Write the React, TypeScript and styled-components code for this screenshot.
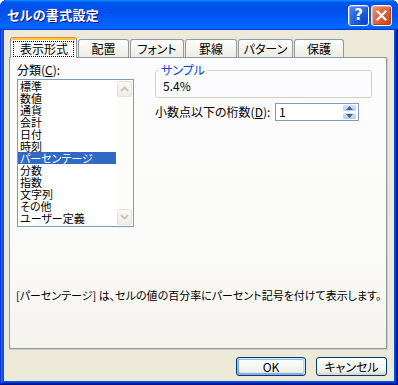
import React from "react";
import styled, { createGlobalStyle, css } from "styled-components";

const GlobalStyle = createGlobalStyle`
  html, body { margin: 0; padding: 0; background: #ffffff; }
  body {
    font-family: "Noto Sans CJK JP", "Noto Sans", sans-serif;
    font-size: 12px;
    font-feature-settings: "palt";
    color: #000;
  }
  * { box-sizing: border-box; }
`;

const Window = styled.div`
  width: 398px;
  height: 385px;
  display: flex;
  flex-direction: column;
  background: #0054e3;
  border-radius: 7px 7px 0 0;
  overflow: hidden;
  box-shadow: inset -1px -1px #00138c, inset 1px 1px #0831d9,
    inset -2px -2px #001ea0, inset 2px 2px #166aee, inset -3px -3px #003bda,
    inset 3px 3px #0855dd;
`;

const TitleBar = styled.div`
  height: 30px;
  flex: none;
  display: flex;
  align-items: center;
  padding: 0 6px 0 7px;
  border-radius: 7px 7px 0 0;
  background: linear-gradient(
    180deg,
    #0997ff,
    #0053ee 8%,
    #0050ee 40%,
    #0066ff 88%,
    #0066ff 93%,
    #005bff 95%,
    #003dd7 96%,
    #003dd7
  );
`;

const TitleText = styled.div`
  flex: 1;
  color: #fff;
  font-weight: bold;
  font-size: 13px;
  line-height: 16px;
  letter-spacing: 0.3px;
  text-shadow: 1px 1px #0f1089;
`;

const CaptionButton = styled.div<{ $kind: "help" | "close" }>`
  width: 21px;
  height: 21px;
  border: 1px solid #fff;
  border-radius: 3px;
  display: flex;
  align-items: center;
  justify-content: center;
  color: #fff;
  font-family: "DejaVu Sans", sans-serif;
  font-weight: bold;
  font-size: 15px;
  line-height: 1;
  ${(p) =>
    p.$kind === "help"
      ? css`
          margin-right: 2px;
          background: radial-gradient(
            circle at 90% 90%,
            #0043cf 0%,
            #2663de 55%,
            #5a8ef5 100%
          );
          box-shadow: inset -1px -1px #1a4cc4, inset 1px 1px #7aa4ff;
        `
      : css`
          background: radial-gradient(
            circle at 90% 90%,
            #cc4614 0%,
            #dc6541 55%,
            #f09c80 100%
          );
          box-shadow: inset -1px -1px #c03a10, inset 1px 1px #f5a889;
        `}
`;

const Client = styled.div`
  flex: 1;
  margin: 0 4px 4px;
  background: #ece9d8;
  display: flex;
  flex-direction: column;
  padding: 7px 7px 5px 5px;
`;

const TabRow = styled.div`
  height: 20px;
  flex: none;
  display: flex;
  align-items: flex-end;
  gap: 1px;
  padding-left: 1px;
  position: relative;
  z-index: 1;
`;

const Tab = styled.div<{ $w: number; $active?: boolean }>`
  width: ${(p) => p.$w}px;
  height: 18px;
  border: 1px solid #919b9c;
  border-bottom: none;
  border-radius: 3px 3px 0 0;
  display: flex;
  align-items: center;
  justify-content: center;
  line-height: 12px;
  background: linear-gradient(180deg, #ffffff, #f3f2ec 60%, #ecebe4);
  ${(p) =>
    p.$active &&
    css`
      height: 21px;
      margin-bottom: -1px;
      background: #fcfcfe;
      border-top: 1px solid #e68b2c;
      box-shadow: inset 0 2px #ffc73c;
      padding-top: 1px;
    `}
`;

const FocusLabel = styled.span`
  border: 1px dotted #000;
  padding: 1px 5px 1px 6px;
  line-height: 12px;
`;

const Panel = styled.div`
  height: 292px;
  flex: none;
  border: 1px solid #919b9c;
  background: linear-gradient(180deg, #fcfcfe 0%, #fbfbf9 60%, #f4f3ee 100%);
  box-shadow: 1px 1px 0 #d0cdbe;
  display: flex;
  flex-direction: column;
  padding: 5px 0 0 7px;
`;

const TopRow = styled.div`
  display: flex;
  gap: 21px;
`;

const LeftCol = styled.div`
  width: 117px;
  display: flex;
  flex-direction: column;
`;

const FieldLabel = styled.div`
  height: 16px;
  line-height: 14px;
`;

const Underline = styled.span`
  text-decoration: underline;
  text-underline-offset: 1px;
`;

const ListBox = styled.div`
  height: 148px;
  border: 1px solid #7f9db9;
  background: #fff;
  display: flex;
`;

const ListItems = styled.div`
  flex: 1;
  display: flex;
  flex-direction: column;
`;

const ListRow = styled.div<{ $selected?: boolean }>`
  height: 12px;
  line-height: 12px;
  font-size: 11px;
  padding-left: 2px;
  white-space: nowrap;
  ${(p) =>
    p.$selected &&
    css`
      background: #316ac5;
      color: #fff;
    `}
`;

const ScrollBar = styled.div`
  width: 17px;
  display: flex;
  flex-direction: column;
  justify-content: space-between;
  padding: 1px;
  background: #fcfcfa;
`;

const ScrollButton = styled.div`
  height: 16px;
  border: 1px solid #e6e4da;
  border-radius: 2px;
  background: linear-gradient(180deg, #f9f8f4, #efeee6);
  display: flex;
  align-items: center;
  justify-content: center;
`;

const RightCol = styled.div`
  width: 217px;
  display: flex;
  flex-direction: column;
  margin-top: 1px;
`;

const GroupBox = styled.fieldset`
  margin: 0;
  min-width: 0;
  border: 1px solid #d0d0bf;
  border-radius: 3px;
  padding: 4px 0 5px 7px;
`;

const GroupLegend = styled.legend`
  color: #0046d5;
  padding: 0 2px;
  margin-left: -4px;
  line-height: 12px;
  font-size: 12px;
`;

const SampleValue = styled.div`
  line-height: 12px;
`;

const SpinRow = styled.div`
  display: flex;
  align-items: center;
  margin-top: 5px;
  height: 18px;
`;

const SpinLabel = styled.div`
  width: 120px;
  line-height: 12px;
  white-space: nowrap;
`;

const SpinBox = styled.div`
  width: 84px;
  height: 18px;
  border: 1px solid #7f9db9;
  background: #fff;
  display: flex;
  align-items: center;
  padding: 0 1px 0 3px;
`;

const SpinValue = styled.div`
  flex: 1;
  line-height: 12px;
`;

const SpinButtons = styled.div`
  width: 15px;
  height: 16px;
  display: flex;
  flex-direction: column;
`;

const SpinButton = styled.div`
  flex: 1;
  border: 1px solid #fff;
  border-radius: 2px;
  background: linear-gradient(180deg, #d8e3fb, #b6cbf5);
  display: flex;
  align-items: center;
  justify-content: center;
`;

const Description = styled.div`
  margin-top: 62px;
  margin-left: -1px;
  line-height: 12px;
  font-size: 11px;
  white-space: nowrap;
`;

const Footer = styled.div`
  display: flex;
  justify-content: flex-end;
  gap: 10px;
  margin-top: 8px;
  height: 19px;
`;

const DialogButton = styled.div<{ $w: number; $default?: boolean }>`
  width: ${(p) => p.$w}px;
  height: 19px;
  border: 1px solid #003c74;
  border-radius: 3px;
  background: linear-gradient(180deg, #ffffff, #f0f0ea 80%, #d6d0c5);
  display: flex;
  align-items: center;
  justify-content: center;
  line-height: 12px;
  ${(p) =>
    p.$default &&
    css`
      box-shadow: inset -1px 1px #cee7ff, inset 1px 2px #98b8ea,
        inset -2px 2px #bcd4f6, inset 1px -1px #89ade4,
        inset 2px -2px #89ade4;
    `}
`;

const Chevron = ({ up, color }: { up: boolean; color: string }) => (
  <svg width="9" height="6" viewBox="0 0 9 6">
    <polyline
      points={up ? "1,5 4.5,1.5 8,5" : "1,1 4.5,4.5 8,1"}
      fill="none"
      stroke={color}
      strokeWidth="2"
    />
  </svg>
);

const Triangle = ({ up }: { up: boolean }) => (
  <svg width="7" height="4" viewBox="0 0 7 4">
    <polygon points={up ? "0,4 3.5,0 7,4" : "0,0 3.5,4 7,0"} fill="#4d6185" />
  </svg>
);

const CloseIcon = () => (
  <svg width="11" height="11" viewBox="0 0 11 11">
    <path d="M1.5 1.5 L9.5 9.5 M9.5 1.5 L1.5 9.5" stroke="#fff" strokeWidth="2.2" strokeLinecap="square" />
  </svg>
);

const tabs = [
  { label: "表示形式", w: 67 },
  { label: "配置", w: 51 },
  { label: "フォント", w: 54 },
  { label: "罫線", w: 52 },
  { label: "パターン", w: 55 },
  { label: "保護", w: 50 },
];

const categories = [
  "標準",
  "数値",
  "通貨",
  "会計",
  "日付",
  "時刻",
  "パーセンテージ",
  "分数",
  "指数",
  "文字列",
  "その他",
  "ユーザー定義",
];

export default function App() {
  return (
    <>
      <GlobalStyle />
      <Window>
        <TitleBar>
          <TitleText>セルの書式設定</TitleText>
          <CaptionButton $kind="help">?</CaptionButton>
          <CaptionButton $kind="close">
            <CloseIcon />
          </CaptionButton>
        </TitleBar>
        <Client>
          <TabRow>
            {tabs.map((t, i) => (
              <Tab key={t.label} $w={t.w} $active={i === 0}>
                {i === 0 ? <FocusLabel>{t.label}</FocusLabel> : t.label}
              </Tab>
            ))}
          </TabRow>
          <Panel>
            <TopRow>
              <LeftCol>
                <FieldLabel>
                  分類(<Underline>C</Underline>):
                </FieldLabel>
                <ListBox>
                  <ListItems>
                    {categories.map((c) => (
                      <ListRow key={c} $selected={c === "パーセンテージ"}>
                        {c}
                      </ListRow>
                    ))}
                  </ListItems>
                  <ScrollBar>
                    <ScrollButton>
                      <Chevron up color="#c8c6b8" />
                    </ScrollButton>
                    <ScrollButton>
                      <Chevron up={false} color="#c8c6b8" />
                    </ScrollButton>
                  </ScrollBar>
                </ListBox>
              </LeftCol>
              <RightCol>
                <GroupBox>
                  <GroupLegend>サンプル</GroupLegend>
                  <SampleValue>5.4%</SampleValue>
                </GroupBox>
                <SpinRow>
                  <SpinLabel>
                    小数点以下の桁数(<Underline>D</Underline>):
                  </SpinLabel>
                  <SpinBox>
                    <SpinValue>1</SpinValue>
                    <SpinButtons>
                      <SpinButton>
                        <Triangle up />
                      </SpinButton>
                      <SpinButton>
                        <Triangle up={false} />
                      </SpinButton>
                    </SpinButtons>
                  </SpinBox>
                </SpinRow>
              </RightCol>
            </TopRow>
            <Description>
              [パーセンテージ] は、セルの値の百分率にパーセント記号を付けて表示します。
            </Description>
          </Panel>
          <Footer>
            <DialogButton $w={70} $default>
              OK
            </DialogButton>
            <DialogButton $w={71}>キャンセル</DialogButton>
          </Footer>
        </Client>
      </Window>
    </>
  );
}
